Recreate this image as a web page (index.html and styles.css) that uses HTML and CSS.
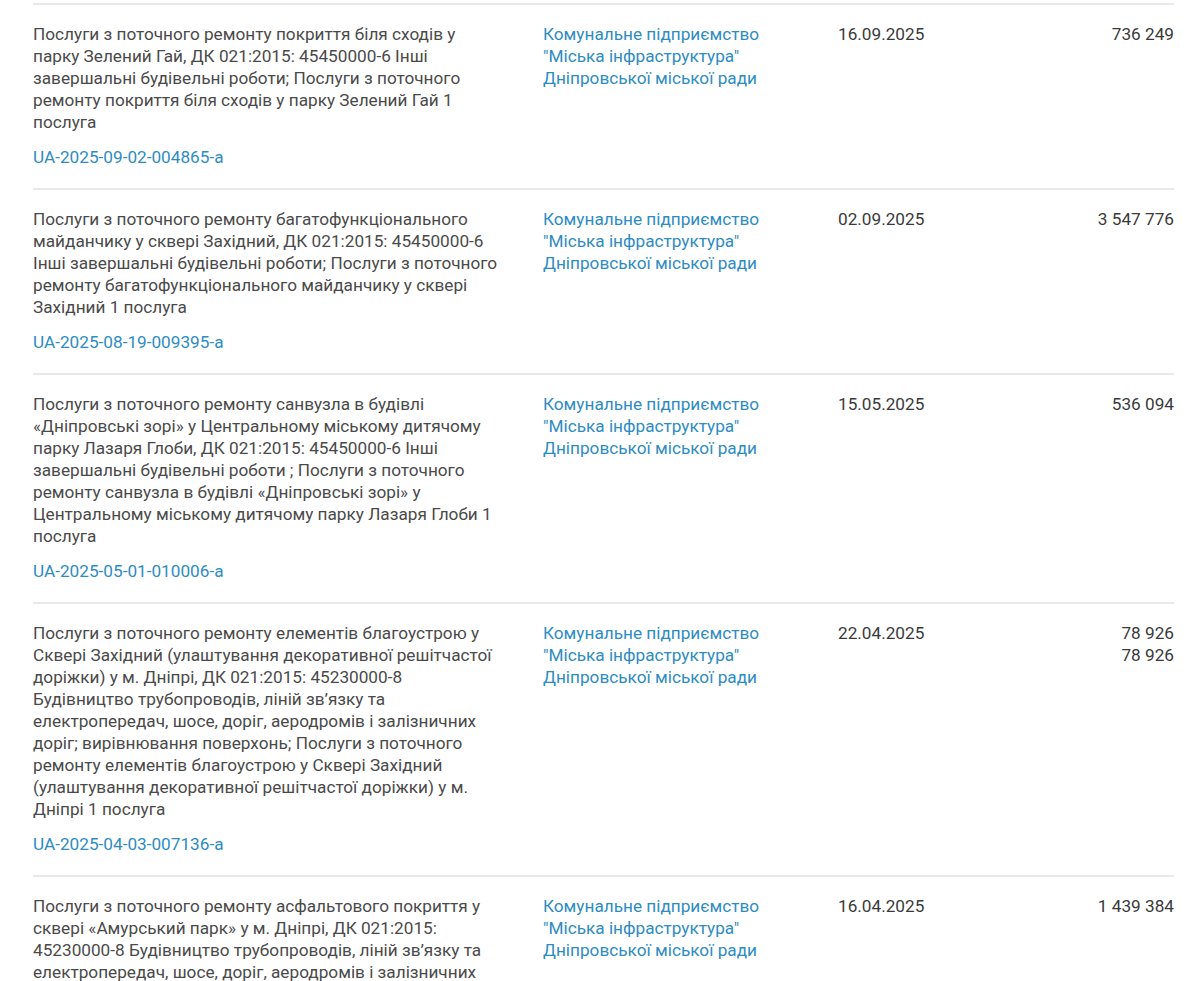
FILE: index.html
```html
<!DOCTYPE html>
<html lang="uk">
<head>
<meta charset="utf-8">
<link rel="stylesheet" href="styles.css">
</head>
<body>
<div class="list">
  <div class="row">
    <div class="desc">
      <p class="text">Послуги з поточного ремонту покриття біля сходів у парку Зелений Гай, ДК 021:2015: 45450000-6 Інші завершальні будівельні роботи; Послуги з поточного ремонту покриття біля сходів у парку Зелений Гай 1 послуга</p>
      <a class="id" href="#">UA-2025-09-02-004865-a</a>
    </div>
    <a class="org" href="#">Комунальне підприємство "Міська інфраструктура" Дніпровської міської ради</a>
    <div class="date">16.09.2025</div>
    <div class="amount">736 249</div>
  </div>
  <div class="row">
    <div class="desc">
      <p class="text">Послуги з поточного ремонту багатофункціонального майданчику у сквері Західний, ДК 021:2015: 45450000-6 Інші завершальні будівельні роботи; Послуги з поточного ремонту багатофункціонального майданчику у сквері Західний 1 послуга</p>
      <a class="id" href="#">UA-2025-08-19-009395-a</a>
    </div>
    <a class="org" href="#">Комунальне підприємство "Міська інфраструктура" Дніпровської міської ради</a>
    <div class="date">02.09.2025</div>
    <div class="amount">3 547 776</div>
  </div>
  <div class="row">
    <div class="desc">
      <p class="text">Послуги з поточного ремонту санвузла в будівлі «Дніпровські зорі» у Центральному міському дитячому парку Лазаря Глоби, ДК 021:2015: 45450000-6 Інші завершальні будівельні роботи ; Послуги з поточного ремонту санвузла в будівлі «Дніпровські зорі» у Центральному міському дитячому парку Лазаря Глоби 1 послуга</p>
      <a class="id" href="#">UA-2025-05-01-010006-a</a>
    </div>
    <a class="org" href="#">Комунальне підприємство "Міська інфраструктура" Дніпровської міської ради</a>
    <div class="date">15.05.2025</div>
    <div class="amount">536 094</div>
  </div>
  <div class="row">
    <div class="desc">
      <p class="text">Послуги з поточного ремонту елементів благоустрою у Сквері Західний (улаштування декоративної решітчастої доріжки) у м. Дніпрі, ДК 021:2015: 45230000-8 Будівництво трубопроводів, ліній зв’язку та електропередач, шосе, доріг, аеродромів і залізничних доріг; вирівнювання поверхонь; Послуги з поточного ремонту елементів благоустрою у Сквері Західний (улаштування декоративної решітчастої доріжки) у м. Дніпрі 1 послуга</p>
      <a class="id" href="#">UA-2025-04-03-007136-a</a>
    </div>
    <a class="org" href="#">Комунальне підприємство "Міська інфраструктура" Дніпровської міської ради</a>
    <div class="date">22.04.2025</div>
    <div class="amount">78 926<br>78 926</div>
  </div>
  <div class="row">
    <div class="desc">
      <p class="text">Послуги з поточного ремонту асфальтового покриття у сквері «Амурський парк» у м. Дніпрі, ДК 021:2015: 45230000-8 Будівництво трубопроводів, ліній зв’язку та електропередач, шосе, доріг, аеродромів і залізничних доріг; вирівнювання поверхонь; Послуги з поточного ремонту асфальтового покриття у сквері «Амурський парк» у м. Дніпрі 1 послуга</p>
      <a class="id" href="#">UA-2025-04-01-004512-a</a>
    </div>
    <a class="org" href="#">Комунальне підприємство "Міська інфраструктура" Дніпровської міської ради</a>
    <div class="date">16.04.2025</div>
    <div class="amount">1 439 384</div>
  </div>
</div>
</body>
</html>
```
FILE: styles.css
```css
html, body {
  margin: 0;
  padding: 0;
  background: #ffffff;
}
body {
  font-family: Roboto, "Noto Sans", "Liberation Sans", sans-serif;
  font-size: 17.2px;
  line-height: 22px;
  color: #4a4a4a;
}
.list {
  margin: 3px 0 0 33px;
  width: 1141px;
}
.row {
  display: grid;
  grid-template-columns: 510px 295px 1fr 200px;
  border-top: 2px solid #e9e9e9;
  padding: 18px 0 20px;
}
.desc {
  padding-right: 44px;
}
.text {
  margin: 0 0 13px;
}
.id, .org {
  color: #2e8cc2;
  text-decoration: none;
}
.id {
  display: block;
}
.org {
  padding-right: 40px;
}
.date {
  color: #3a3a3a;
}
.amount {
  color: #3a3a3a;
  text-align: right;
}
```
